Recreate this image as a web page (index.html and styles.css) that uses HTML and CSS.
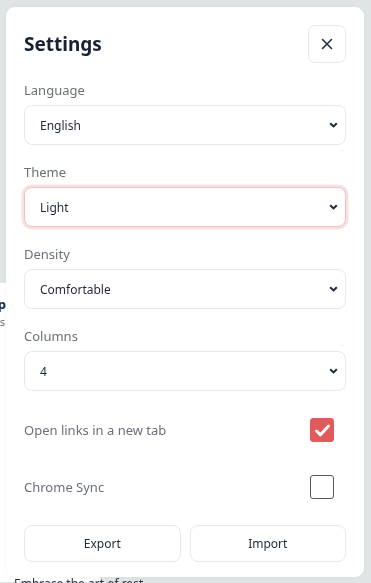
FILE: index.html
```html
<!DOCTYPE html>
<html lang="en">
<head>
<meta charset="utf-8">
<title>Settings</title>
<link rel="stylesheet" href="styles.css">
</head>
<body>
<div class="backdrop">
  <div class="bg-card">
    <div class="bg-title">p</div>
    <div class="bg-sub">s</div>
  </div>
  <div class="bg-foot">Embrace the art of rest</div>
</div>
<div class="panel">
  <div class="header">
    <h1 class="title">Settings</h1>
    <button class="close" type="button" aria-label="Close">
      <svg width="12" height="12" viewBox="0 0 12 12"><path d="M1.5 1.5 L10.5 10.5 M10.5 1.5 L1.5 10.5" stroke="#262f3d" stroke-width="1.6" stroke-linecap="round" fill="none"/></svg>
    </button>
  </div>

  <div class="field">
    <label class="label">Language</label>
    <div class="select-wrap">
      <select class="select"><option>English</option></select>
      <svg class="chev" width="9" height="6" viewBox="0 0 9 6"><path d="M1.2 1.2 L4.5 4.4 L7.8 1.2" stroke="#1f2937" stroke-width="2" fill="none"/></svg>
    </div>
  </div>

  <div class="field">
    <label class="label">Theme</label>
    <div class="select-wrap">
      <select class="select focus"><option>Light</option></select>
      <svg class="chev" width="9" height="6" viewBox="0 0 9 6"><path d="M1.2 1.2 L4.5 4.4 L7.8 1.2" stroke="#1f2937" stroke-width="2" fill="none"/></svg>
    </div>
  </div>

  <div class="field">
    <label class="label">Density</label>
    <div class="select-wrap">
      <select class="select"><option>Comfortable</option></select>
      <svg class="chev" width="9" height="6" viewBox="0 0 9 6"><path d="M1.2 1.2 L4.5 4.4 L7.8 1.2" stroke="#1f2937" stroke-width="2" fill="none"/></svg>
    </div>
  </div>

  <div class="field">
    <label class="label">Columns</label>
    <div class="select-wrap">
      <select class="select"><option>4</option></select>
      <svg class="chev" width="9" height="6" viewBox="0 0 9 6"><path d="M1.2 1.2 L4.5 4.4 L7.8 1.2" stroke="#1f2937" stroke-width="2" fill="none"/></svg>
    </div>
  </div>

  <div class="toggle-row first">
    <span class="toggle-label">Open links in a new tab</span>
    <span class="check on">
      <svg width="17" height="15" viewBox="0 0 17 15"><path d="M2.5 8 L6.5 11.8 L14.5 3" stroke="#fff" stroke-width="3" stroke-linecap="round" stroke-linejoin="round" fill="none"/></svg>
    </span>
  </div>

  <div class="toggle-row second">
    <span class="toggle-label">Chrome Sync</span>
    <span class="check"></span>
  </div>

  <div class="actions">
    <button class="btn" type="button">Export</button>
    <button class="btn" type="button">Import</button>
  </div>
</div>
</body>
</html>
```

FILE: styles.css
```css
* { box-sizing: border-box; }

html, body {
  margin: 0;
  height: 100%;
}

body {
  background: #dfe4e4;
  font-family: "Noto Sans", "Open Sans", "DejaVu Sans", sans-serif;
  padding: 7px 7px 0 6px;
  overflow: hidden;
}

.backdrop {
  position: fixed;
  inset: 0;
  z-index: 0;
}

.bg-card {
  position: absolute;
  left: -200px;
  top: 282px;
  width: 300px;
  height: 300px;
  background: #fff;
  border-top: 1px solid #e3e6e8;
}

.bg-title {
  position: absolute;
  right: 94px;
  top: 12px;
  font-weight: 700;
  font-size: 13px;
  color: #1f2937;
}

.bg-sub {
  position: absolute;
  right: 95px;
  top: 31px;
  font-size: 11px;
  color: #6b7280;
}

.bg-foot {
  position: absolute;
  left: 14px;
  top: 575px;
  font-size: 12px;
  color: #2d3340;
}

.panel {
  position: relative;
  z-index: 1;
  width: 358px;
  height: 570px;
  background: #fff;
  border-radius: 9px;
  padding: 18px 18px 16px 18px;
  box-shadow: 0 0 4px rgba(0, 0, 0, 0.04);
}

.header {
  display: flex;
  justify-content: space-between;
  align-items: center;
  height: 38px;
}

.title {
  margin: 0;
  font-size: 19px;
  font-weight: 700;
  color: #1a2230;
}

.close {
  width: 38px;
  height: 38px;
  border: 1px solid #e6e8eb;
  border-radius: 7px;
  background: #fff;
  display: flex;
  align-items: center;
  justify-content: center;
  padding: 0;
}

.field {
  margin-top: 18px;
}

.label {
  display: block;
  font-size: 13px;
  line-height: 18px;
  color: #6b7078;
  margin-bottom: 6px;
}

.select-wrap {
  position: relative;
}

.select {
  appearance: none;
  -webkit-appearance: none;
  width: 100%;
  height: 40px;
  border: 1px solid #e6e8eb;
  border-radius: 8px;
  background: #fff;
  padding: 0 15px;
  font-family: inherit;
  font-size: 12px;
  color: #1f2937;
  outline: none;
}

.select.focus {
  border: 1px solid #eec3c6;
  box-shadow: 0 0 0 2.5px #f9e0e2;
}

.chev {
  position: absolute;
  right: 8px;
  top: 17px;
  pointer-events: none;
}

.toggle-row {
  display: flex;
  justify-content: space-between;
  align-items: center;
  height: 24px;
  padding-right: 12px;
}

.toggle-row.first { margin-top: 27px; }
.toggle-row.second { margin-top: 33px; }

.toggle-label {
  font-size: 13px;
  color: #6b7078;
}

.check {
  width: 24px;
  height: 24px;
  border: 1px solid #55595f;
  border-radius: 3px;
  background: #fff;
  display: flex;
  align-items: center;
  justify-content: center;
}

.check.on {
  background: #e25a5c;
  border-color: #e25a5c;
}

.actions {
  display: grid;
  grid-template-columns: 1fr 1fr;
  gap: 9px;
  margin-top: 26px;
}

.btn {
  height: 37px;
  border: 1px solid #e6e8eb;
  border-radius: 8px;
  background: #fff;
  font-family: inherit;
  font-size: 12px;
  color: #1f2937;
}
```
